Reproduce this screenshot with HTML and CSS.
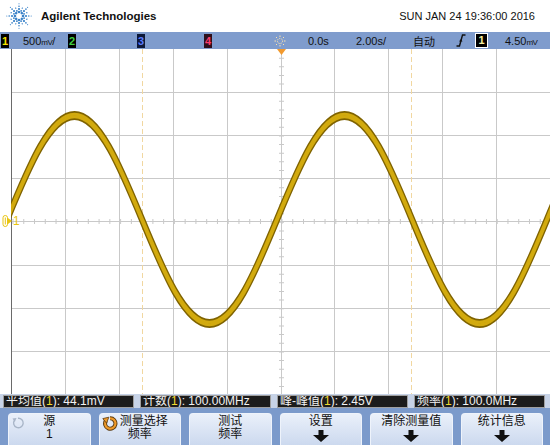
FILE: index.html
```html
<!DOCTYPE html>
<html lang="zh">

<head>
    <meta charset="UTF-8">
    <meta name="viewport" content="width=device-width, initial-scale=1.0">
    <title>Agilent 示波器</title>
    <link rel="stylesheet" href="styles.css">
</head>

<body>
    <div class="header">
        <svg class="logo" width="26" height="26" viewBox="0 0 26 26">
            <defs>
                <g id="ray-main">
                    <circle cx="17" cy="13" r="1.3"/>
                    <circle cx="20" cy="13" r="1.1"/>
                    <circle cx="22.8" cy="13" r="0.8"/>
                    <circle cx="25.2" cy="13" r="0.55"/>
                </g>
                <g id="ray-minor">
                    <circle cx="18.5" cy="13" r="0.9"/>
                    <circle cx="21.5" cy="13" r="0.7"/>
                </g>
            </defs>
            <g fill="#3a82c8">
                <use href="#ray-main"/>
                <use href="#ray-main" transform="rotate(45 13 13)"/>
                <use href="#ray-main" transform="rotate(90 13 13)"/>
                <use href="#ray-main" transform="rotate(135 13 13)"/>
                <use href="#ray-main" transform="rotate(180 13 13)"/>
                <use href="#ray-main" transform="rotate(225 13 13)"/>
                <use href="#ray-main" transform="rotate(270 13 13)"/>
                <use href="#ray-main" transform="rotate(315 13 13)"/>
                <use href="#ray-minor" transform="rotate(22.5 13 13)"/>
                <use href="#ray-minor" transform="rotate(67.5 13 13)"/>
                <use href="#ray-minor" transform="rotate(112.5 13 13)"/>
                <use href="#ray-minor" transform="rotate(157.5 13 13)"/>
                <use href="#ray-minor" transform="rotate(202.5 13 13)"/>
                <use href="#ray-minor" transform="rotate(247.5 13 13)"/>
                <use href="#ray-minor" transform="rotate(292.5 13 13)"/>
                <use href="#ray-minor" transform="rotate(337.5 13 13)"/>
            </g>
        </svg>
        <span class="brand">Agilent Technologies</span>
        <span class="clock">SUN JAN 24 19:36:00 2016</span>
    </div>

    <div class="status">
        <span class="ch ch1">1</span>
        <span>500<span class="unit">mV</span>/</span>
        <span class="ch ch2">2</span>
        <span class="ch ch3">3</span>
        <span class="ch ch4">4</span>
        <svg class="sun" width="12" height="12" viewBox="0 0 12 12">
            <circle cx="6" cy="6" r="2.6" fill="none" stroke="#fbe3b0" stroke-width="1" stroke-dasharray="1.2 1"/>
            <path d="M6 0.5V2M6 10V11.5M0.5 6H2M10 6H11.5M2 2L3 3M9 9L10 10M10 2L9 3M2 10L3 9" stroke="#fbe3b0" stroke-width="1"/>
        </svg>
        <span>0.0s</span>
        <span>2.00s/</span>
        <span>自动</span>
        <svg class="slope" width="10" height="13" viewBox="0 0 10 13">
            <path d="M0.5 12H3.5L6.5 1H9.5" fill="none" stroke="#111" stroke-width="1.4"/>
            <path d="M3 7.5L5 5L6.5 7.5Z" fill="#111"/>
        </svg>
        <span class="trig">1</span>
        <span>4.50<span class="unit">mV</span></span>
    </div>

    <div class="screen">
        <svg width="550" height="345" viewBox="0 49 550 345">
            <defs>
                <clipPath id="plot">
                    <rect x="11" y="49" width="539" height="345"/>
                </clipPath>
                <path id="wave" fill="none" d="M7 219.5
                    C29.01 166.22 50.07 115.5 74.5 115.5
                    C98.93 115.5 119.99 166.22 142 219.5
                    C164.01 272.78 185.07 323.5 209.5 323.5
                    C233.93 323.5 254.99 272.78 277 219.5
                    C299.01 166.22 320.07 115.5 344.5 115.5
                    C368.93 115.5 389.99 166.22 412 219.5
                    C434.01 272.78 455.07 323.5 479.5 323.5
                    C503.93 323.5 524.99 272.78 547 219.5
                    C569.01 166.22 590.07 115.5 614.5 115.5"/>
            </defs>

            <!-- rejilla -->
            <path stroke="#c9c9c9" stroke-width="1" d="M12 92.5H550M12 135.5H550M12 178.5H550M12 221.5H550M12 265.5H550M12 308.5H550M12 351.5H550
                M65.5 49V394M119.5 49V394M173.5 49V394M227.5 49V394M281.5 49V394M334.5 49V394M388.5 49V394M442.5 49V394M496.5 49V394"/>
            <path stroke="#c9c9c9" stroke-width="5" stroke-dasharray="1 9.76" d="M12.5 221.5H550"/>
            <path stroke="#c9c9c9" stroke-width="5" stroke-dasharray="1 7.64" d="M281.5 49V394"/>
            <path stroke="#6a6a6a" stroke-width="1" d="M11.5 49V394"/>
            <path stroke="#f1d7a0" stroke-width="1" stroke-dasharray="5 3" d="M142.5 49V394M411.5 49V394"/>
            <polygon points="277,49 286,49 281.5,55" fill="#f29a2e"/>

            <!-- traza canal 1 -->
            <g clip-path="url(#plot)">
                <use href="#wave" stroke="#7f6300" stroke-width="5" transform="translate(0,-2)"/>
                <use href="#wave" stroke="#7f6300" stroke-width="5" transform="translate(0,2)"/>
                <use href="#wave" stroke="#d2aa0e" stroke-width="3" transform="translate(0,-1.3)"/>
                <use href="#wave" stroke="#d2aa0e" stroke-width="3" transform="translate(0,1.3)"/>
            </g>
        </svg>
        <div class="gnd">
            <svg width="11" height="14" viewBox="0 0 11 14">
                <rect x="1" y="1.5" width="4.5" height="11" rx="2.2" fill="none" stroke="#e8c410" stroke-width="1"/>
                <path d="M3.3 3.5V10.5" stroke="#e8c410" stroke-width="1"/>
                <path d="M6 4L10 7L6 10Z" fill="#e8c410"/>
            </svg>
            <span>1</span>
        </div>
    </div>

    <div class="meas">
        <div class="mbox">平均值(<b>1</b>): 44.1mV</div>
        <div class="mbox">计数(<b>1</b>): 100.00MHz</div>
        <div class="mbox">峰-峰值(<b>1</b>): 2.45V</div>
        <div class="mbox">频率(<b>1</b>): 100.0MHz</div>
    </div>

    <div class="keys">
        <div class="key">
            <svg class="knob faded" width="14" height="14" viewBox="0 0 14 14">
                <path d="M3.5 4.2A4.8 4.8 0 1 0 7 2.2" fill="none" stroke="#a9b6c8" stroke-width="1.4"/>
                <path d="M1.5 2.5L5.5 2L3.8 6Z" fill="#a9b6c8"/>
            </svg>
            <span>源</span>
            <span>1</span>
        </div>
        <div class="key">
            <svg class="knob" width="16" height="15" viewBox="0 0 16 15">
                <path d="M4 4.5A5.2 5.2 0 1 0 8 2.3" fill="none" stroke="#5a3a10" stroke-width="4"/>
                <path d="M4 4.5A5.2 5.2 0 1 0 8 2.3" fill="none" stroke="#ee9a2a" stroke-width="2.2"/>
                <path d="M0.8 2.6L6.8 1.2L4.6 7.2Z" fill="#ee9a2a" stroke="#5a3a10" stroke-width="0.8"/>
            </svg>
            <span class="pad">测量选择</span>
            <span>频率</span>
        </div>
        <div class="key">
            <span>测试</span>
            <span>频率</span>
        </div>
        <div class="key">
            <span>设置</span>
            <svg class="down" width="16" height="12" viewBox="0 0 16 12"><path d="M5.5 0H10.5V5H16L8 12L0 5H5.5Z" fill="#111"/></svg>
        </div>
        <div class="key">
            <span>清除测量值</span>
            <svg class="down" width="16" height="12" viewBox="0 0 16 12"><path d="M5.5 0H10.5V5H16L8 12L0 5H5.5Z" fill="#111"/></svg>
        </div>
        <div class="key">
            <span>统计信息</span>
            <svg class="down" width="16" height="12" viewBox="0 0 16 12"><path d="M5.5 0H10.5V5H16L8 12L0 5H5.5Z" fill="#111"/></svg>
        </div>
    </div>
</body>

</html>
```

FILE: styles.css
```css
* {
    box-sizing: border-box;
}

body {
    margin: 0;
    width: 550px;
    height: 445px;
    overflow: hidden;
    background: #fff;
    color: #111;
    font-family: "Liberation Sans", "Noto Sans CJK SC", sans-serif;
}

.header {
    height: 32px;
    display: flex;
    align-items: center;
    padding: 0 15px 0 6px;
}

.logo {
    margin-right: 9px;
}

.brand {
    font-weight: bold;
    font-size: 11.5px;
}

.clock {
    margin-left: auto;
    font-size: 11px;
}

/* barra de estado */
.status {
    height: 17px;
    background: #7f9ccd;
    display: grid;
    grid-template-columns: 22px 45px 69px 67px 70px 34px 48px 57px 43px 19px 30px auto;
    align-items: center;
    padding-left: 1px;
    font-size: 11px;
    white-space: nowrap;
}

.unit {
    font-size: 8px;
    letter-spacing: -0.5px;
}

.ch {
    display: block;
    width: 8px;
    height: 14px;
    background: #000;
    font-size: 11px;
    font-weight: bold;
    line-height: 14px;
    text-align: center;
}

.ch1 {
    color: #f5e300;
}

.ch2 {
    color: #3fcf3f;
}

.ch3 {
    background: #0d1838;
    color: #5a7cff;
}

.ch4 {
    background: #2e0f1b;
    color: #ff3c6c;
}

.trig {
    display: block;
    width: 13px;
    height: 15px;
    background: #000;
    border: 1px solid #fff;
    color: #f6f0a0;
    font-weight: bold;
    line-height: 13px;
    text-align: center;
}

/* pantalla */
.screen {
    position: relative;
    height: 345px;
}

.screen > svg {
    display: block;
}

.gnd {
    position: absolute;
    left: 2px;
    top: 165px;
    display: flex;
    align-items: center;
    color: #e8c410;
    font-size: 12px;
    line-height: 14px;
}

/* mediciones */
.meas {
    height: 14px;
    background: #c7d3e7;
    display: grid;
    grid-template-columns: repeat(4, 131px);
    column-gap: 6px;
    padding: 1px 0 0 3px;
}

.mbox {
    height: 13px;
    background: #1c1c1c;
    border: 1px solid #a0a0a0;
    color: #f2f2f2;
    font-size: 12px;
    line-height: 11px;
    padding-left: 2px;
    white-space: nowrap;
    overflow: hidden;
}

.mbox b {
    color: #f0da30;
    font-weight: normal;
}

/* teclas */
.keys {
    height: 37px;
    background: #7b9acb;
    display: grid;
    grid-template-columns: repeat(6, 1fr);
    column-gap: 8px;
    padding: 5px 7px 0 8px;
}

.key {
    position: relative;
    height: 36px;
    border-radius: 4px 4px 0 0;
    border: 1px solid #eef3fb;
    border-bottom: none;
    background: linear-gradient(#eaf0fa, #c8d6ed);
    display: flex;
    flex-direction: column;
    align-items: center;
    padding-top: 1px;
    font-size: 12px;
    line-height: 13px;
}

.knob {
    position: absolute;
    left: 2px;
    top: 2px;
}

.pad {
    padding-left: 8px;
}

.down {
    margin-top: 2px;
}
```
